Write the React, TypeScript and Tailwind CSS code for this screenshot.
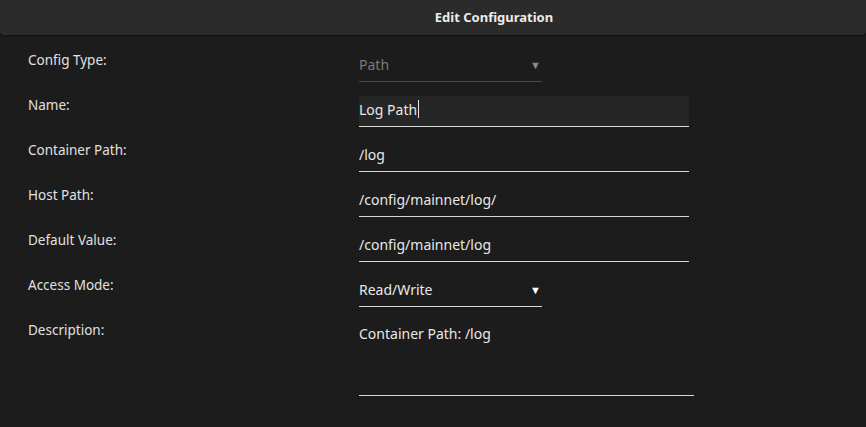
const rows: { label: string; kind: 'select' | 'input' | 'text'; value: string; muted?: boolean; active?: boolean }[] = [
  { label: 'Config Type:', kind: 'select', value: 'Path', muted: true },
  { label: 'Name:', kind: 'input', value: 'Log Path', active: true },
  { label: 'Container Path:', kind: 'input', value: '/log' },
  { label: 'Host Path:', kind: 'input', value: '/config/mainnet/log/' },
  { label: 'Default Value:', kind: 'input', value: '/config/mainnet/log' },
  { label: 'Access Mode:', kind: 'select', value: 'Read/Write' },
]

function Caret() {
  return <span className="inline-block w-px h-[18px] bg-[#e8e8e8] ml-px" />
}

export default function App() {
  return (
    <div
      className="w-[866px] h-[427px] bg-[#1c1c1c] text-[13.5px] text-[#e0e0e0] overflow-hidden"
      style={{ fontFamily: '"Noto Sans", "Open Sans", sans-serif' }}
    >
      {/* title bar */}
      <div className="h-[35px] bg-[#2b2b2b] rounded-b-[4px] shadow-[0_1px_2px_rgba(0,0,0,0.4)] flex items-center justify-center pl-[122px]">
        <span className="font-bold text-[13px] text-[#ececec]">Edit Configuration</span>
      </div>

      <div className="pt-[15px] px-[28px]">
        {rows.map(r => (
          <div key={r.label} className="flex items-start h-[45px]">
            <div className="w-[331px] leading-[20px]">{r.label}</div>
            {r.kind === 'select' ? (
              <div
                className={`mt-px w-[183px] h-[31px] pb-[4px] flex items-center justify-between border-b text-[14px] ${
                  r.muted ? 'border-[#4a4a4a] text-[#7a7a7a]' : 'border-[#d8d8d8] text-[#e8e8e8]'
                }`}
              >
                <span>{r.value}</span>
                <span className={`text-[11px] leading-none mr-px ${r.muted ? 'text-[#8a8a8a]' : 'text-white'}`}>▼</span>
              </div>
            ) : (
              <div
                className={`mt-px w-[330px] h-[31px] pb-[4px] flex items-center border-b border-[#d8d8d8] text-[14px] text-[#e8e8e8] ${
                  r.active ? 'bg-[#262626]' : ''
                }`}
              >
                <span>{r.value}</span>
                {r.active && <Caret />}
              </div>
            )}
          </div>
        ))}

        <div className="flex items-start">
          <div className="w-[331px] leading-[20px]">Description:</div>
          <div className="w-[335px] h-[76px] pt-[4px] leading-[20px] border-b border-[#d8d8d8] text-[14px] text-[#e8e8e8]">
            Container Path: /log
          </div>
        </div>
      </div>
    </div>
  )
}
